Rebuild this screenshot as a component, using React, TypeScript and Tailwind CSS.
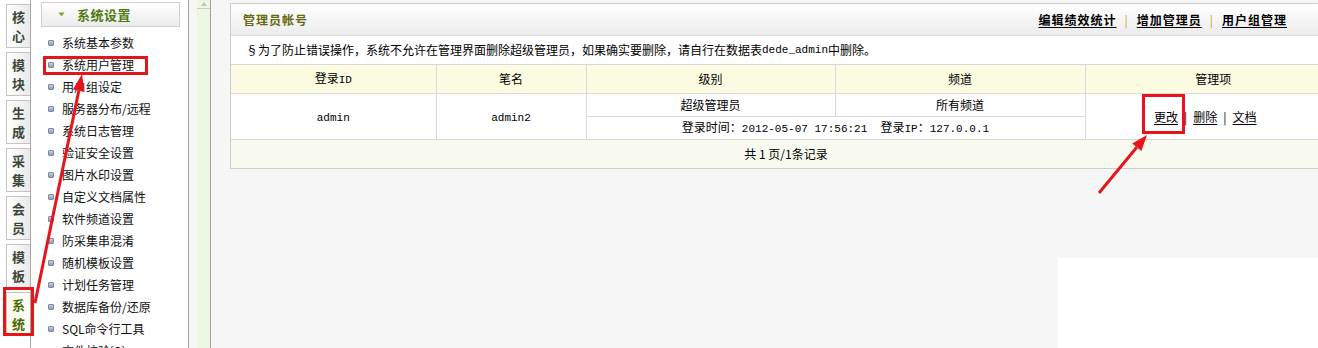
import React from "react";

// --- Data ---

const tabs = [
    { a: "核", b: "心" },
    { a: "模", b: "块" },
    { a: "生", b: "成" },
    { a: "采", b: "集" },
    { a: "会", b: "员" },
    { a: "模", b: "板" },
    { a: "系", b: "统", active: true },
];

const menu = [
    "系统基本参数",
    "系统用户管理",
    "用户组设定",
    "服务器分布/远程",
    "系统日志管理",
    "验证安全设置",
    "图片水印设置",
    "自定义文档属性",
    "软件频道设置",
    "防采集串混淆",
    "随机模板设置",
    "计划任务管理",
    "数据库备份/还原",
    "SQL命令行工具",
    "文件校验[S]",
];

const font = "font-['Noto_Sans_CJK_SC','Noto_Sans',sans-serif]";
const mono = "font-['Liberation_Mono','Noto_Sans_CJK_SC',monospace] text-[11px]";

// --- Pieces ---

function Tabs() {
    return (
        <div className="w-[31px] shrink-0 bg-white border-r border-[#a9a9a9] flex flex-col gap-[4px] pt-[4px] pl-[6px]">
            {tabs.map((t, i) => (
                <div
                    key={i}
                    className={
                        "h-[44px] w-[24px] border border-r-0 border-[#c4c4c4] flex flex-col items-center justify-center text-[13px] font-bold leading-[19px] " +
                        (t.active
                            ? "bg-[#fbfcef] text-[#4a6a06]"
                            : "bg-gradient-to-r from-white to-[#e9e9e9] text-[#3b4638]")
                    }
                >
                    <span>{t.a}</span>
                    <span>{t.b}</span>
                </div>
            ))}
        </div>
    );
}

function Sidebar() {
    return (
        <div className="w-[157px] shrink-0 bg-white pl-[10px] pt-[2px]">
            <div className="w-[139px] h-[25px] border border-[#cfcfcf] bg-gradient-to-b from-white to-[#ececec] flex items-center">
                <svg width="7" height="5" viewBox="0 0 7 5" className="ml-[16px]">
                    <path d="M0.5 0.5 L6.5 0.5 L3.5 4.5 Z" fill="#7aa83a" />
                </svg>
                <span className="ml-[12px] text-[13px] font-bold text-[#4f7a12] tracking-[0.5px]">系统设置</span>
            </div>
            <ul className="mt-[5px]">
                {menu.map((m) => (
                    <li key={m} className="h-[22px] flex items-center pl-[7px] text-[12px] text-[#111]">
                        <span className="w-[6px] h-[6px] rounded-[1px] border border-[#7c8ca4] bg-gradient-to-b from-[#c6d0de] to-[#8d9bb3] shrink-0" />
                        <span className="ml-[8px] whitespace-nowrap">{m}</span>
                    </li>
                ))}
            </ul>
        </div>
    );
}

function FrameBar() {
    return (
        <div className="w-[23px] shrink-0 flex border-l border-r border-[#a4a39a]">
            <div className="w-[8px] bg-[#f7f8f6]" />
            <div className="flex-1 bg-[#eef6e6] flex flex-col">
                <div className="h-[9px] border-b border-[#c9c9c0] flex items-start justify-center">
                    <svg width="6" height="4" viewBox="0 0 6 4" className="mt-[2px]">
                        <path d="M0 4 L3 0 L6 4 Z" fill="#c4c4bc" />
                    </svg>
                </div>
            </div>
        </div>
    );
}

function AdminPanel() {
    const cell = "border border-[#d9d9d9] text-center text-[12px]";
    return (
        <div className="w-[1112px] border border-[#cdcdcd] bg-white">
            <div className="h-[32px] bg-gradient-to-b from-white to-[#ececec] border-b border-[#dcdcdc] flex items-center justify-between pl-[12px] pr-[54px]">
                <span className="text-[12px] font-bold tracking-[1px] text-[#656a10]">管理员帐号</span>
                <div className="flex items-center text-[12px] font-bold tracking-[1px] text-black">
                    <a className="underline underline-offset-2">编辑绩效统计</a>
                    <span className="mx-[8px] text-[#c6ad00] font-normal">|</span>
                    <a className="underline underline-offset-2">增加管理员</a>
                    <span className="mx-[8px] text-[#c6ad00] font-normal">|</span>
                    <a className="underline underline-offset-2">用户组管理</a>
                </div>
            </div>
            <div className="h-[28px] flex items-center pl-[15px] text-[12px] text-black">
                §为了防止错误操作，系统不允许在管理界面删除超级管理员，如果确实要删除，请自行在数据表<span className={mono}>dede_admin</span>中删除。
            </div>
            <table className="w-full border-collapse table-fixed">
                <colgroup>
                    <col className="w-[205px]" />
                    <col className="w-[150px]" />
                    <col className="w-[249px]" />
                    <col className="w-[250px]" />
                    <col />
                </colgroup>
                <tbody>
                    <tr className="h-[29px] bg-[#fbfbe2]">
                        <td className={cell + " border-l-0"}>登录<span className={mono}>ID</span></td>
                        <td className={cell}>笔名</td>
                        <td className={cell}>级别</td>
                        <td className={cell}>频道</td>
                        <td className={cell + " border-r-0"}>管理项</td>
                    </tr>
                    <tr className="h-[23px]">
                        <td rowSpan={2} className={cell + " border-l-0"}><span className={mono}>admin</span></td>
                        <td rowSpan={2} className={cell}><span className={mono}>admin2</span></td>
                        <td className={cell}>超级管理员</td>
                        <td className={cell}>所有频道</td>
                        <td rowSpan={2} className={cell + " border-r-0"}>
                            <div className="flex items-center justify-center pr-[16px]">
                                <a className="underline underline-offset-2">更改</a>
                                <span className="mx-[6px]">|</span>
                                <a className="underline underline-offset-2">删除</a>
                                <span className="mx-[6px]">|</span>
                                <a className="underline underline-offset-2">文档</a>
                            </div>
                        </td>
                    </tr>
                    <tr className="h-[23px]">
                        <td colSpan={2} className={cell}>
                            登录时间：<span className={mono}>2012-05-07 17:56:21&nbsp;&nbsp;</span>登录<span className={mono}>IP</span>：<span className={mono}>127.0.0.1</span>
                        </td>
                    </tr>
                    <tr className="h-[28px] bg-[#f9faef]">
                        <td colSpan={5} className={cell + " border-x-0 border-b-0"}>共 1 页/1条记录</td>
                    </tr>
                </tbody>
            </table>
        </div>
    );
}

// --- Annotation overlay (red boxes and arrows) ---

function Marks() {
    const red = "#e8141b";
    return (
        <svg className="absolute inset-0 pointer-events-none" width="1318" height="348" viewBox="0 0 1318 348">
            <rect x="44.5" y="57.5" width="102" height="16" fill="none" stroke={red} strokeWidth="3" />
            <rect x="4.5" y="288.5" width="28" height="46" fill="none" stroke={red} strokeWidth="3" />
            <rect x="1143.5" y="95.5" width="40" height="37" fill="none" stroke={red} strokeWidth="3" />
            <line x1="35" y1="303" x2="78.8" y2="90.7" stroke={red} strokeWidth="3" />
            <polygon points="82,74 84.7,91.9 72.9,89.5" fill={red} />
            <line x1="1099" y1="193" x2="1136.8" y2="147.3" stroke={red} strokeWidth="3" />
            <polygon points="1147,135 1141.4,151.1 1132.2,143.5" fill={red} />
        </svg>
    );
}

// --- Page ---

export default function App() {
    return (
        <div className={"relative w-[1318px] h-[348px] overflow-hidden flex bg-[#f6f6f6] text-black " + font}>
            <Tabs />
            <Sidebar />
            <FrameBar />
            <div className="flex-1 pl-[19px] pt-[3px] flex flex-col">
                <AdminPanel />
                <div className="mt-[89px] ml-[828px] w-[300px] h-[100px] bg-white" />
            </div>
            <Marks />
        </div>
    );
}
